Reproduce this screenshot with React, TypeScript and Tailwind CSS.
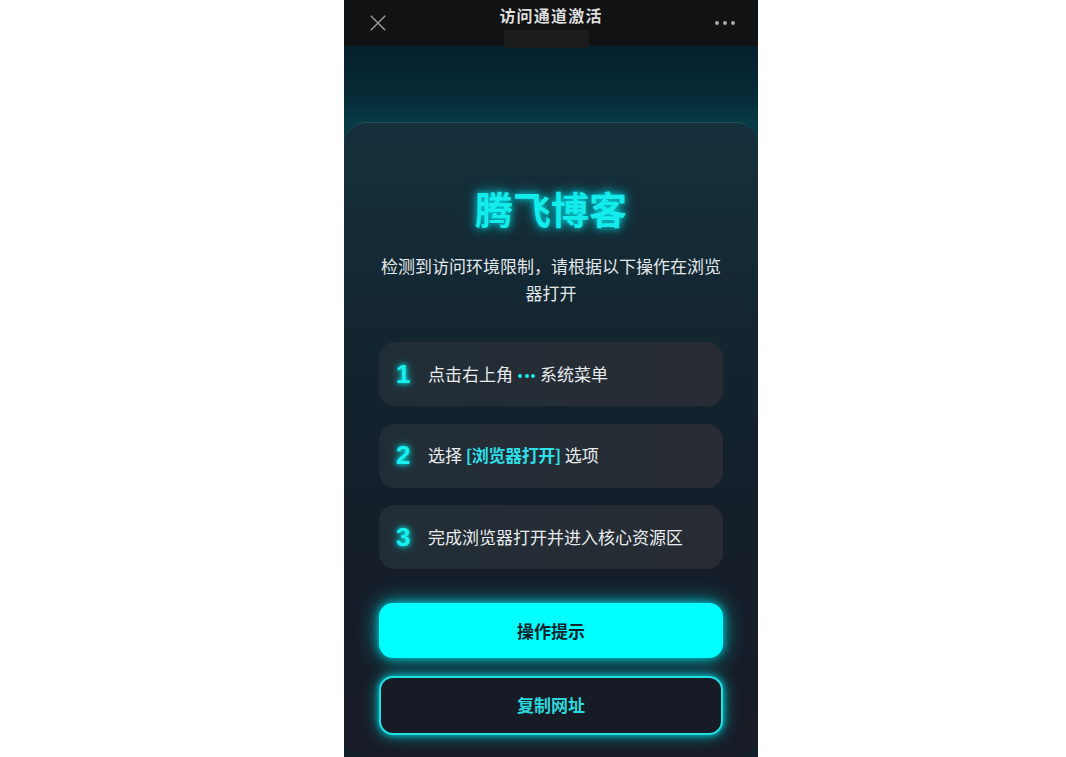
import React from "react";

const font = { fontFamily: '"Noto Sans CJK SC", "Liberation Sans", sans-serif' };

const StepRow = ({ num, children }: { num: string; children: React.ReactNode }) => (
  <div className="flex h-[64px] items-center rounded-[16px] bg-gradient-to-r from-[#212d36] to-[#282c34] pb-[1px] pl-[17px]">
    <span className="w-[32px] text-[26px] font-bold leading-none text-[#19f0f0] [font-family:'Liberation_Sans',sans-serif] [text-shadow:0_0_4px_#00e5e5,0_0_10px_#00c8d0]">
      {num}
    </span>
    <span className="text-[17px] leading-[24px] text-[#e8ecee]">{children}</span>
  </div>
);

export default function App() {
  return (
    <div className="flex h-[757px] overflow-hidden bg-white pl-[344px]" style={font}>
      <div className="flex w-[414px] flex-col bg-[#0f1a24]">
        <div className="relative flex h-[46px] shrink-0 items-start justify-between bg-[#111213] pl-[26px] pr-[23px]">
          <svg className="mt-[15px]" width="16" height="16" viewBox="0 0 16 16" fill="none" stroke="#a3a3a3" strokeWidth="1.3">
            <path d="M0.8 0.8L15.2 15.2M15.2 0.8L0.8 15.2" />
          </svg>
          <div className="absolute left-0 right-0 top-[4px] text-center text-[16px] font-semibold leading-[22px] tracking-[1.2px] text-[#dedede]">
            访问通道激活
          </div>
          <div className="absolute left-[160px] top-[30px] h-[18px] w-[85px] bg-[#1b1c1d]" />
          <div className="mt-[21px] flex gap-[4px]">
            <span className="h-[4px] w-[4px] rounded-full bg-[#a8a8a8]" />
            <span className="h-[4px] w-[4px] rounded-full bg-[#a8a8a8]" />
            <span className="h-[4px] w-[4px] rounded-full bg-[#a8a8a8]" />
          </div>
        </div>

        <div className="flex flex-1 flex-col bg-[linear-gradient(180deg,#051f2c_0px,#062b37_50px,#073a44_76px,#073a44_200px,#12202b_300px)] pt-[76px]">
          <div className="flex flex-1 flex-col rounded-[22px] border-t border-[#1d5058] bg-[linear-gradient(180deg,#15303c_0%,#13252f_35%,#141f2a_60%,#181c27_100%)] px-[35px]">
            <h1 className="mt-[58px] text-center text-[38px] font-semibold leading-[54px] text-[#14ecec] [text-shadow:0_0_6px_#00c8d0,0_0_14px_#00a8b0]">
              腾飞博客
            </h1>
            <p className="mt-[17px] text-center text-[17px] leading-[27px] text-[#e2e7ea]">
              检测到访问环境限制，请根据以下操作在浏览器打开
            </p>
            <div className="mt-[36px] flex flex-col gap-[17.5px]">
              <StepRow num="1">
                点击右上角
                <span className="mx-[5px] inline-flex gap-[2.5px] align-middle">
                  <span className="h-[4px] w-[4px] rounded-full bg-[#19f0f0]" />
                  <span className="h-[4px] w-[4px] rounded-full bg-[#19f0f0]" />
                  <span className="h-[4px] w-[4px] rounded-full bg-[#19f0f0]" />
                </span>
                系统菜单
              </StepRow>
              <StepRow num="2">
                选择 <span className="font-bold tracking-[-0.4px] text-[#2ddfe6]">[浏览器打开]</span> 选项
              </StepRow>
              <StepRow num="3">完成浏览器打开并进入核心资源区</StepRow>
            </div>
            <button className="mt-[34px] h-[55px] shrink-0 rounded-[14px] bg-[#00ffff] text-[17px] font-bold text-[#14222b] shadow-[0_0_8px_#00c8d0,0_0_22px_#00a0a8]">
              操作提示
            </button>
            <button className="mt-[18px] h-[59px] shrink-0 rounded-[14px] border-2 border-[#22dfe2] bg-[#171b26] pb-[2px] text-[17px] font-bold text-[#2dd8dc] shadow-[0_0_6px_#00c8d0,0_0_16px_#00a0a8]">
              复制网址
            </button>
          </div>
        </div>
      </div>
    </div>
  );
}
